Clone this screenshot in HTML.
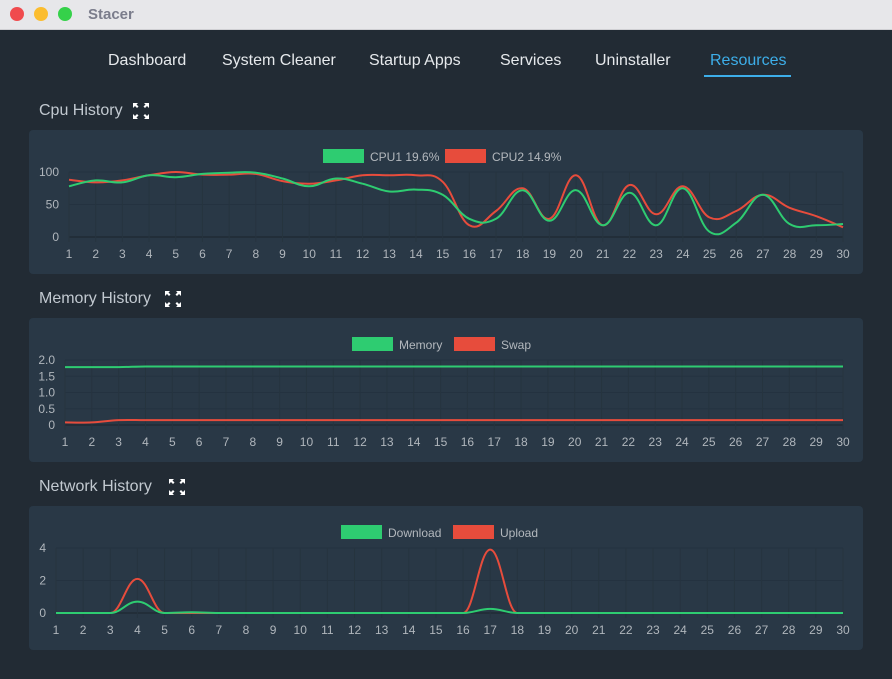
<!DOCTYPE html>
<html><head><meta charset="utf-8"><style>
*{margin:0;padding:0;box-sizing:border-box}
html,body{width:892px;height:679px;overflow:hidden;background:#222b34;font-family:"Liberation Sans",sans-serif}
#tb{position:absolute;left:0;top:0;width:892px;height:30px;background:#e7e7ea;border-bottom:1px solid #cfcfd3}
.dot{position:absolute;top:7px;width:14px;height:14px;border-radius:50%}
#title{position:absolute;left:88px;top:6px;font-size:15px;font-weight:bold;color:#7b7d8c}
.nav{position:absolute;top:52px;font-size:16px;color:#e6e9ec;white-space:nowrap}
.sec{position:absolute;left:39px;font-size:16px;color:#c2c9d0}
.panel{position:absolute;left:29px;width:834px;height:144px;background:#293846;border-radius:4px}
svg{position:absolute;left:0;top:0}
</style></head><body>
<div id="tb">
<div class="dot" style="left:10px;background:#f04b4e"></div>
<div class="dot" style="left:34px;background:#fbbd2f"></div>
<div class="dot" style="left:58px;background:#35d14a"></div>
<div id="title">Stacer</div>
</div>
<div class="nav" style="left:108px">Dashboard</div>
<div class="nav" style="left:222px">System Cleaner</div>
<div class="nav" style="left:369px">Startup Apps</div>
<div class="nav" style="left:500px">Services</div>
<div class="nav" style="left:595px">Uninstaller</div>
<div class="nav" style="left:710px;color:#3daee9">Resources</div>
<div style="position:absolute;left:704px;top:75px;width:87px;height:2px;background:#3daee9"></div>

<div class="sec" style="top:102px">Cpu History</div>
<div class="sec" style="top:290px">Memory History</div>
<div class="sec" style="top:478px">Network History</div>
<div class="panel" style="top:130px"></div>
<div class="panel" style="top:318px"></div>
<div class="panel" style="top:506px"></div>
<svg id="s" width="892" height="679" xmlns="http://www.w3.org/2000/svg" font-family="Liberation Sans, sans-serif"></svg>
<script>
var s=document.getElementById('s'),h='';
function icon(x,y){var p='';
 p+='<path d="M'+x+' '+y+'h5l-1.5 1.5 2 2-1.5 1.5-2-2L'+x+' '+(y+5)+'z"/>';
 p+='<path d="M'+(x+16)+' '+y+'h-5l1.5 1.5-2 2 1.5 1.5 2-2L'+(x+16)+' '+(y+5)+'z"/>';
 p+='<path d="M'+x+' '+(y+16)+'h5l-1.5-1.5 2-2-1.5-1.5-2 2L'+x+' '+(y+11)+'z"/>';
 p+='<path d="M'+(x+16)+' '+(y+16)+'h-5l1.5-1.5-2-2 1.5-1.5 2 2L'+(x+16)+' '+(y+11)+'z"/>';
 return '<g fill="#fff">'+p+'</g>';}
h+=icon(133,103)+icon(165,291)+icon(169,479);
function path(pts,yb){var d='M'+pts[0][0]+' '+pts[0][1],t=0.4;
 for(var i=0;i<pts.length-1;i++){var p0=pts[i-1]||pts[i],p1=pts[i],p2=pts[i+1],p3=pts[i+2]||p2;
  var c1x=p1[0]+(p2[0]-p0[0])*t/2,c1y=p1[1]+(p2[1]-p0[1])*t/2,c2x=p2[0]-(p3[0]-p1[0])*t/2,c2y=p2[1]-(p3[1]-p1[1])*t/2;
  if(yb){c1y=Math.min(c1y,yb);c2y=Math.min(c2y,yb);if(p1[1]==p2[1]){c1y=c2y=p1[1];}
   if(p1[1]==yb)c1y=yb; if(p2[1]==yb)c2y=yb;}
  d+='C'+c1x.toFixed(1)+' '+c1y.toFixed(1)+' '+c2x.toFixed(1)+' '+c2y.toFixed(1)+' '+p2[0].toFixed(1)+' '+p2[1].toFixed(1);}
 return d;}
function chart(o){var x0=o.x0,x1=843,st=(x1-x0)/29,g='';
 o.ticks.forEach(function(t){var y=o.yb-(o.yb-o.yt)*t[0]/o.max;
  g+='<line x1="'+x0+'" x2="'+x1+'" y1="'+y+'" y2="'+y+'" stroke="'+(t[0]==0?'#1b242c':'#243240')+'" stroke-width="1"/>';
  g+='<text x="'+(x0-10)+'" y="'+(y+4)+'" text-anchor="end" font-size="12" fill="#b0b6bc">'+t[1]+'</text>';});
 for(var i=0;i<30;i++){var x=x0+i*st;
  g+='<line x1="'+x+'" x2="'+x+'" y1="'+o.yt+'" y2="'+(o.yb+5)+'" stroke="#26343f"/>';
  g+='<text x="'+x+'" y="'+(o.yb+21)+'" text-anchor="middle" font-size="12" fill="#b0b6bc">'+(i+1)+'</text>';}
 o.series.forEach(function(sr){var pts=sr[1].map(function(v,i){return [x0+i*st,o.yb-(o.yb-o.yt)*v/o.max];});
  g+='<path d="'+path(pts,o.clamp?o.yb:0)+'" fill="none" stroke="'+sr[0]+'" stroke-width="2"/>';});
 o.leg.forEach(function(l){g+='<rect x="'+l[0]+'" y="'+o.ly+'" width="41" height="14" fill="'+l[1]+'"/><text x="'+(l[0]+47)+'" y="'+(o.ly+12)+'" font-size="12" fill="#b3b8bd">'+l[2]+'</text>';});
 return g;}
var G='#2ecc71',R='#e74c3c';
h+=chart({x0:69,yt:172,yb:237,max:100,ticks:[[0,'0'],[50,'50'],[100,'100']],ly:149,
 leg:[[323,G,'CPU1 19.6%'],[445,R,'CPU2 14.9%']],
 series:[[R,[88,84,87,95,100,96,96,97,86,82,87,95,95,95,85,18,40,75,28,95,18,80,35,78,30,40,65,45,32,15]],
 [G,[78,87,84,95,92,97,99,99,90,78,90,82,70,73,65,28,28,72,25,72,18,68,18,75,8,22,65,20,18,20]]]});
var m1=[],m2=[];for(var i=0;i<30;i++){m1.push(i<3?1.78:1.8);m2.push(i<2?0.08:0.15);}
h+=chart({x0:65,yt:360,yb:425,max:2,ticks:[[0,'0'],[0.5,'0.5'],[1,'1.0'],[1.5,'1.5'],[2,'2.0']],ly:337,
 leg:[[352,G,'Memory'],[454,R,'Swap']],series:[[R,m2],[G,m1]]});
var n1=[],n2=[];for(var i=0;i<30;i++){n1.push(0);n2.push(0);}
n2[3]=2.1;n2[16]=3.9;n1[3]=0.7;n1[16]=0.25;n1[5]=0.05;
h+=chart({x0:56,yt:548,yb:613,max:4,clamp:1,ticks:[[0,'0'],[2,'2'],[4,'4']],ly:525,
 leg:[[341,G,'Download'],[453,R,'Upload']],series:[[R,n2],[G,n1]]});
s.innerHTML=h;
</script>
</body></html>
